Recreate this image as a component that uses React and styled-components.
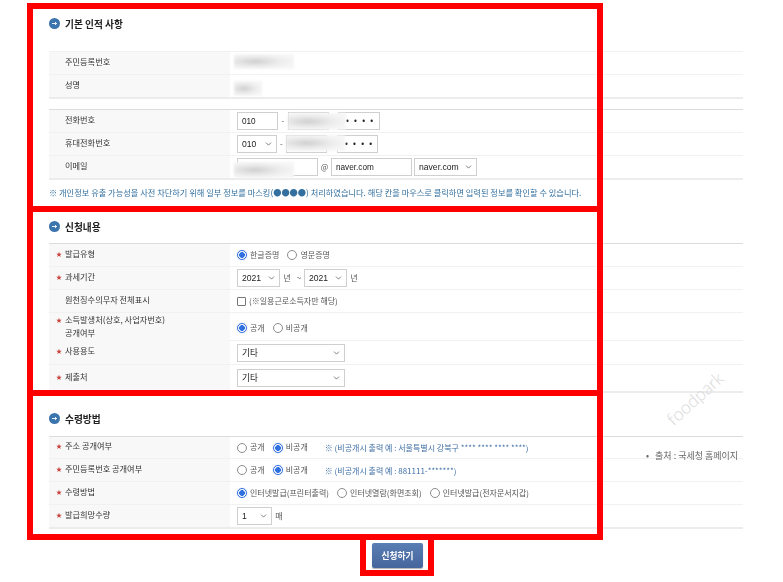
import React from 'react'
import styled, { createGlobalStyle } from 'styled-components'
import { ChevronDown } from 'lucide-react'

const GlobalStyle = createGlobalStyle`
  html, body {
    margin: 0;
    padding: 0;
    background: #fff;
  }
  body {
    font-family: "Noto Sans CJK KR", "Liberation Sans", sans-serif;
    overflow: hidden;
  }
`

const Page = styled.div`
  position: relative;
  width: 783px;
  height: 582px;
  overflow: hidden;
`
const Content = styled.div`
  box-sizing: border-box;
  width: 743px;
  padding: 14px 0 0 49px;
  filter: blur(0.3px);
`
const SectionTitle = styled.h2`
  display: flex;
  align-items: center;
  gap: 5px;
  height: 19px;
  margin: ${props => props.$top}px 0 ${props => props.$bottom}px;
  font-size: 9.7px;
  font-weight: 700;
  color: #222;
  svg { flex: none; }
`
const Table = styled.div`
  margin-bottom: ${props => props.$gap || 0}px;
  border-top: 1px solid ${props => props.$light ? '#f1f1f1' : '#dcdcdc'};
  border-bottom: 2px solid #ececec;
`
const Row = styled.div`
  display: grid;
  grid-template-columns: 181px 1fr;
  box-sizing: border-box;
  height: ${props => (props.$height || 23) - (props.$first ? 1 : 0)}px;
  border-top: ${props => props.$first ? 'none' : '1px solid #f1f1f1'};
`
const Label = styled.div`
  display: flex;
  align-items: center;
  padding: 0 0 4px 7px;
  background: #f8f8f8;
  font-size: 8.2px;
  line-height: 13px;
  color: #333;
`
const Star = styled.span`
  flex: none;
  width: 9px;
  font-size: 6px;
  line-height: 13px;
  color: #c8403a;
  align-self: ${props => props.$multi ? 'flex-start' : 'center'};
  visibility: ${props => props.$on ? 'visible' : 'hidden'};
`
const Value = styled.div`
  position: relative;
  display: flex;
  align-items: center;
  padding-left: 7px;
  font-size: 8px;
  color: #555;
`
const Patch = styled.div`
  position: absolute;
  left: ${props => props.$left}px;
  top: ${props => props.$top}px;
  width: ${props => props.$width}px;
  height: ${props => props.$height}px;
  background: radial-gradient(ellipse at 35% 50%, #cfcfcf 0%, #ececec 45%, #f6f6f6 75%);
  filter: blur(1px);
`
const TextInput = styled.input`
  box-sizing: border-box;
  width: ${props => props.$width}px;
  height: 18px;
  padding: 0 4px;
  margin: 0;
  border: 1px solid #cfcfcf;
  border-radius: 0;
  background: #fff;
  font-family: "Liberation Sans", "Noto Sans CJK KR", sans-serif;
  font-size: 8.2px;
  color: #222;
  letter-spacing: ${props => props.$dots ? '5.2px' : '0'};
  padding-left: ${props => props.$dots ? '7px' : '4px'};
`
const SelectWrap = styled.span`
  position: relative;
  display: inline-flex;
  flex: none;
  width: ${props => props.$width}px;
  svg {
    position: absolute;
    right: 4px;
    top: 50%;
    transform: translateY(-50%);
    color: #222;
    pointer-events: none;
  }
`
const NativeSelect = styled.select`
  appearance: none;
  box-sizing: border-box;
  width: 100%;
  height: 18px;
  margin: 0;
  padding: 0 4px;
  border: 1px solid #cfcfcf;
  border-radius: 0;
  background: #fff;
  font-family: "Liberation Sans", "Noto Sans CJK KR", sans-serif;
  font-size: 8.6px;
  color: #222;
`
const Sep = styled.span`
  flex: none;
  width: ${props => props.$width}px;
  padding-bottom: 2px;
  text-align: center;
  font-size: 8px;
  color: #555;
`
const Choice = styled.label`
  display: inline-flex;
  align-items: center;
  gap: 3px;
  padding-bottom: 2px;
  margin-right: ${props => props.$gap || 0}px;
  flex: none;
`
const Radio = styled.input.attrs({ type: 'radio' })`
  appearance: none;
  box-sizing: border-box;
  width: 10px;
  height: 10px;
  margin: 2px 0 0;
  border: 1px solid #8b8b8b;
  border-radius: 50%;
  background: #fff;
  &:checked {
    border-color: #2f6fe0;
    background: radial-gradient(circle, #2f6fe0 0 2.6px, #fff 3.1px);
    box-shadow: 0 0 1px #7ea6ee;
  }
`
const Check = styled.input.attrs({ type: 'checkbox' })`
  appearance: none;
  box-sizing: border-box;
  width: 9px;
  height: 9px;
  margin: 2px 0 0;
  border: 1px solid #777;
  border-radius: 1px;
  background: #fff;
`
const Hint = styled.span`
  margin-left: ${props => props.$left}px;
  color: #3f6fa5;
  white-space: nowrap;
`
const Note = styled.p`
  margin: 0 0 13px;
  height: 24px;
  line-height: 24px;
  font-size: 8.22px;
  color: #33709f;
  white-space: nowrap;
`
const Frame = styled.div`
  position: absolute;
  box-sizing: border-box;
  left: ${props => props.$x}px;
  top: ${props => props.$y}px;
  width: ${props => props.$w}px;
  height: ${props => props.$h}px;
  border: 6px solid #f00;
`
const Submit = styled.button`
  position: absolute;
  left: 372px;
  top: 543px;
  width: 51px;
  height: 25px;
  padding: 0;
  border: none;
  border-radius: 2px;
  background: linear-gradient(#5a7db3, #44669c);
  box-shadow: 0 1px 1px rgba(0, 0, 0, 0.3);
  font-family: "Noto Sans CJK KR", sans-serif;
  font-size: 8.7px;
  font-weight: 700;
  color: #fff;
  filter: blur(0.3px);
`
const Source = styled.div`
  position: absolute;
  left: 646px;
  top: 449px;
  font-size: 9px;
  line-height: 13px;
  color: #666;
  white-space: nowrap;
  filter: blur(0.3px);
  span { margin-right: 6px; }
`
const Watermark = styled.div`
  position: absolute;
  left: 660px;
  top: 387px;
  font-family: "Lato", sans-serif;
  font-weight: 300;
  font-size: 18px;
  line-height: 22px;
  color: #d8d8d8;
  transform: rotate(-42deg);
`

const TitleIcon = () => (
  <svg width="11" height="11" viewBox="0 0 11 11">
    <circle cx="5.5" cy="5.5" r="5.5" fill="#3c74ae" />
    <path d="M3 5.5h4.6M6 4l1.6 1.5L6 7" fill="none" stroke="#fff" strokeWidth="0.9" />
  </svg>
)

const Select = ({ width, value }) => (
  <SelectWrap $width={width}>
    <NativeSelect defaultValue={value}>
      <option>{value}</option>
    </NativeSelect>
    <ChevronDown size={9} strokeWidth={1.5} />
  </SelectWrap>
)

const Field = ({ label, required, multi, height, first, children }) => (
  <Row $height={height} $first={first}>
    <Label><Star $on={required} $multi={multi}>★</Star><span>{label}</span></Label>
    <Value>{children}</Value>
  </Row>
)

const Pick = ({ name, checked, gap, children }) => (
  <Choice $gap={gap}>
    <Radio name={name} defaultChecked={checked} />
    {children}
  </Choice>
)

export default function App() {
  return (
    <Page>
      <GlobalStyle />
      <Content>
        <SectionTitle $top={0} $bottom={18}><TitleIcon />기본 인적 사항</SectionTitle>
        <Table $light $gap={10}>
          <Field first label="주민등록번호"><Patch $left={4} $top={2} $width={60} $height={15} /></Field>
          <Field label="성명"><Patch $left={4} $top={6} $width={28} $height={15} /></Field>
        </Table>
        <Table>
          <Field first label="전화번호">
            <TextInput $width={41} defaultValue="010" />
            <Sep $width={10}>-</Sep>
            <TextInput $width={41} />
            <Sep $width={9} />
            <TextInput $width={42} $dots defaultValue="••••" />
            <Patch $left={58} $top={3} $width={58} $height={17} />
          </Field>
          <Field label="휴대전화번호">
            <Select width={40} value="010" />
            <Sep $width={9}>-</Sep>
            <TextInput $width={41} />
            <Sep $width={10} />
            <TextInput $width={41} $dots defaultValue="••••" />
            <Patch $left={56} $top={2} $width={59} $height={16} />
          </Field>
          <Field label="이메일">
            <TextInput $width={81} />
            <Sep $width={13}>@</Sep>
            <TextInput $width={81} defaultValue="naver.com" />
            <Sep $width={2} />
            <Select width={63} value="naver.com" />
            <Patch $left={4} $top={6} $width={60} $height={16} />
          </Field>
        </Table>
        <Note>※ 개인정보 유출 가능성을 사전 차단하기 위해 일부 정보를 마스킹(●●●●) 처리하였습니다. 해당 칸을 마우스로 클릭하면 입력된 정보를 확인할 수 있습니다.</Note>

        <SectionTitle $top={0} $bottom={7}><TitleIcon />신청내용</SectionTitle>
        <Table>
          <Field first required label="발급유형">
            <Pick name="type" checked gap={8}>한글증명</Pick>
            <Pick name="type">영문증명</Pick>
          </Field>
          <Field required label="과세기간">
            <Select width={43} value="2021" />
            <Sep $width={14}>년</Sep>
            <Sep $width={10}>~</Sep>
            <Select width={43} value="2021" />
            <Sep $width={14}>년</Sep>
          </Field>
          <Field label="원천징수의무자 전체표시">
            <Choice><Check />(※일용근로소득자만 해당)</Choice>
          </Field>
          <Field required multi height={28} label={<>소득발생처(상호, 사업자번호)<br />공개여부</>}>
            <Pick name="open" checked gap={8}>공개</Pick>
            <Pick name="open">비공개</Pick>
          </Field>
          <Field required height={24} label="사용용도"><Select width={108} value="기타" /></Field>
          <Field required height={27} label="제출처"><Select width={108} value="기타" /></Field>
        </Table>

        <SectionTitle $top={16} $bottom={8}><TitleIcon />수령방법</SectionTitle>
        <Table>
          <Field first required height={22} label="주소 공개여부">
            <Pick name="addr" gap={8}>공개</Pick>
            <Pick name="addr" checked>비공개</Pick>
            <Hint $left={17}>※ (비공개시 출력 예 : 서울특별시 강북구 **** **** **** ****)</Hint>
          </Field>
          <Field required label="주민등록번호 공개여부">
            <Pick name="rrn" gap={8}>공개</Pick>
            <Pick name="rrn" checked>비공개</Pick>
            <Hint $left={17}>※ (비공개시 출력 예 : 881111-*******)</Hint>
          </Field>
          <Field required label="수령방법">
            <Pick name="how" checked gap={8}>인터넷발급(프린터출력)</Pick>
            <Pick name="how" gap={8}>인터넷열람(화면조회)</Pick>
            <Pick name="how">인터넷발급(전자문서지갑)</Pick>
          </Field>
          <Field required label="발급희망수량">
            <Select width={35} value="1" />
            <Sep $width={14}>매</Sep>
          </Field>
        </Table>
      </Content>

      <Source><span>•</span>출처 : 국세청 홈페이지</Source>
      <Watermark>foodpark</Watermark>

      <Frame $x={27} $y={3} $w={576} $h={209} />
      <Frame $x={27} $y={206} $w={576} $h={190} />
      <Frame $x={27} $y={390} $w={576} $h={150} />
      <Frame $x={360} $y={534} $w={74} $h={42} />
      <Submit>신청하기</Submit>
    </Page>
  )
}
